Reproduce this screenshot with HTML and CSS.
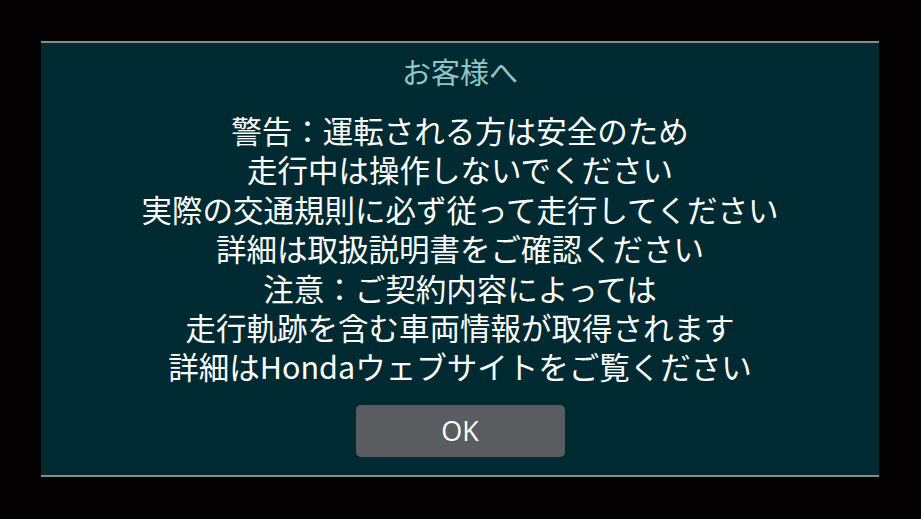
FILE: index.html
```html
<!DOCTYPE html>
<html lang="ja">
<head>
<meta charset="utf-8">
<link rel="stylesheet" href="styles.css">
</head>
<body>
<div class="dialog">
  <div class="title">お客様へ</div>
  <div class="message">
    <p>警告：運転される方は安全のため</p>
    <p>走行中は操作しないでください</p>
    <p>実際の交通規則に必ず従って走行してください</p>
    <p>詳細は取扱説明書をご確認ください</p>
    <p>注意：ご契約内容によっては</p>
    <p>走行軌跡を含む車両情報が取得されます</p>
    <p>詳細はHondaウェブサイトをご覧ください</p>
  </div>
  <button class="ok">OK</button>
</div>
</body>
</html>
```
FILE: styles.css
```css
html, body {
  margin: 0;
  padding: 0;
  width: 921px;
  height: 519px;
  background: #050203;
  overflow: hidden;
}
body {
  padding-top: 41px;
  box-sizing: border-box;
  font-family: "Noto Sans CJK JP", "Noto Sans", sans-serif;
}
.dialog {
  margin-left: 41px;
  width: 838px;
  height: 436px;
  box-sizing: border-box;
  background: #002a31;
  border-top: 2px solid #8a8c8c;
  border-bottom: 2px solid #8a8c8c;
  display: flex;
  flex-direction: column;
  align-items: center;
  padding-top: 8px;
}
.title {
  color: #90c6c6;
  font-size: 29px;
  line-height: 40px;
  height: 40px;
}
.message {
  margin-top: 20px;
  color: #ffffff;
  font-size: 30.5px;
  text-align: center;
}
.message p {
  margin: 0;
  line-height: 39.4px;
  height: 39.4px;
}
.ok {
  margin-top: 18px;
  width: 209px;
  height: 52px;
  background: #5a5d60;
  border: none;
  border-radius: 5px;
  color: #ffffff;
  font-family: "Open Sans", "Noto Sans", sans-serif;
  font-size: 27px;
  padding: 0;
}
```
